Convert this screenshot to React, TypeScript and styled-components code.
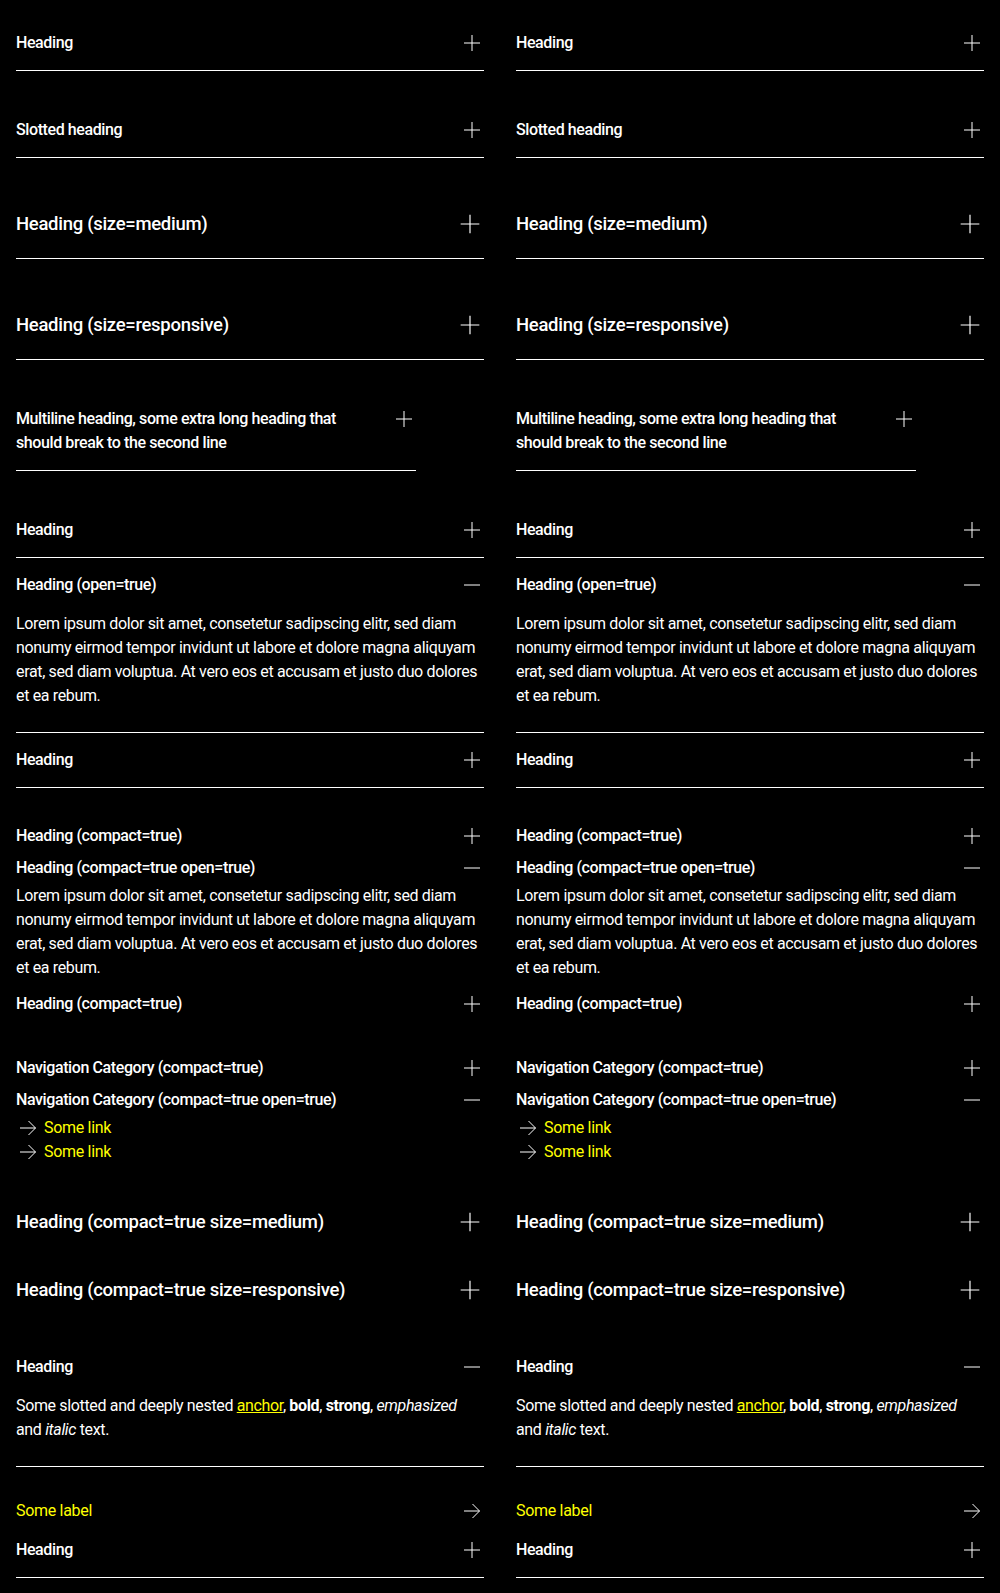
import React from 'react';
import styled, { createGlobalStyle } from 'styled-components';

type Size = 'small' | 'medium';

const GlobalStyle = createGlobalStyle`
  html, body {
    margin: 0;
    background: #000;
  }
  body {
    font-family: Roboto, "Liberation Sans", Arial, sans-serif;
    color: #fff;
    -webkit-font-smoothing: antialiased;
  }
`;

const Page = styled.main`
  display: grid;
  grid-template-columns: 1fr 1fr;
  column-gap: 32px;
  padding: 16px;
  min-height: 1593px;
  box-sizing: border-box;
  background: #000;
`;

const Column = styled.div`
  display: flex;
  flex-direction: column;
  gap: 32px;
  min-width: 0;
`;

const Group = styled.div`
  display: flex;
  flex-direction: column;
`;

const Item = styled.section<{ $compact?: boolean; $narrow?: boolean }>`
  border-bottom: ${p => (p.$compact ? 'none' : '1px solid #fff')};
  max-width: ${p => (p.$narrow ? '400px' : 'none')};
`;

const Header = styled.div<{ $compact?: boolean; $size: Size }>`
  display: flex;
  justify-content: space-between;
  align-items: flex-start;
  gap: 24px;
  padding: ${p => (p.$compact ? '4px 0' : p.$size === 'medium' ? '20px 0' : '15px 0')};
  cursor: pointer;
`;

const Title = styled.h3<{ $size: Size }>`
  margin: 0;
  color: #fff;
  font-weight: 500;
  font-size: ${p => (p.$size === 'medium' ? '18.5px' : '16px')};
  line-height: ${p => (p.$size === 'medium' ? '28px' : '24px')};
  letter-spacing: ${p => (p.$size === 'medium' ? '-0.3px' : '-0.4px')};
`;

const IconBox = styled.span<{ $size?: Size }>`
  flex: none;
  display: flex;
  width: ${p => (p.$size === 'medium' ? '28px' : '24px')};
  height: ${p => (p.$size === 'medium' ? '28px' : '24px')};

  svg {
    width: 100%;
    height: 100%;
  }
`;

const Body = styled.div<{ $compact?: boolean }>`
  padding-bottom: ${p => (p.$compact ? '8px' : '24px')};
  font-size: 16px;
  line-height: 24px;
  letter-spacing: -0.35px;
  color: #fff;

  a {
    color: #ff0;
    text-decoration: underline;
  }
  b,
  strong {
    font-weight: 700;
  }
`;

const LinkList = styled.ul`
  list-style: none;
  margin: 0;
  padding: 0;
`;

const LinkRow = styled.li`
  display: flex;
  align-items: center;
  gap: 4px;
  font-size: 16px;
  line-height: 24px;

  a {
    color: #ff0;
    text-decoration: none;
    letter-spacing: -0.3px;
  }
`;

const LabelRow = styled.a`
  display: flex;
  justify-content: space-between;
  align-items: flex-start;
  gap: 24px;
  color: #ff0;
  text-decoration: none;
  font-size: 16px;
  line-height: 24px;
  letter-spacing: -0.3px;
`;

const PlusIcon = () => (
  <svg viewBox="0 0 24 24" fill="none" stroke="#fff" strokeWidth={1}>
    <path d="M12 4v16M4 12h16" />
  </svg>
);

const MinusIcon = () => (
  <svg viewBox="0 0 24 24" fill="none" stroke="#fff" strokeWidth={1}>
    <path d="M4 12h16" />
  </svg>
);

const ArrowIcon = () => (
  <svg viewBox="0 0 24 24" fill="none" stroke="#fff" strokeWidth={1}>
    <path d="M4 12h15.5M12.5 5l7 7-7 7" />
  </svg>
);

type AccordionProps = {
  heading: React.ReactNode;
  size?: Size;
  compact?: boolean;
  open?: boolean;
  narrow?: boolean;
  children?: React.ReactNode;
};

const Accordion = ({ heading, size = 'small', compact, open, narrow, children }: AccordionProps) => (
  <Item $compact={compact} $narrow={narrow}>
    <Header $compact={compact} $size={size}>
      <Title $size={size}>{heading}</Title>
      <IconBox $size={size}>{open ? <MinusIcon /> : <PlusIcon />}</IconBox>
    </Header>
    {open && <Body $compact={compact}>{children}</Body>}
  </Item>
);

const LOREM =
  'Lorem ipsum dolor sit amet, consetetur sadipscing elitr, sed diam nonumy eirmod tempor invidunt ut labore et dolore magna aliquyam erat, sed diam voluptua. At vero eos et accusam et justo duo dolores et ea rebum.';

const Demo = () => (
  <Column>
    <Group>
      <Accordion heading="Heading" />
    </Group>
    <Group>
      <Accordion heading="Slotted heading" />
    </Group>
    <Group>
      <Accordion heading="Heading (size=medium)" size="medium" />
    </Group>
    <Group>
      <Accordion heading="Heading (size=responsive)" size="medium" />
    </Group>
    <Group>
      <Accordion heading="Multiline heading, some extra long heading that should break to the second line" narrow />
    </Group>
    <Group>
      <Accordion heading="Heading" />
      <Accordion heading="Heading (open=true)" open>
        {LOREM}
      </Accordion>
      <Accordion heading="Heading" />
    </Group>
    <Group>
      <Accordion heading="Heading (compact=true)" compact />
      <Accordion heading="Heading (compact=true open=true)" compact open>
        {LOREM}
      </Accordion>
      <Accordion heading="Heading (compact=true)" compact />
    </Group>
    <Group>
      <Accordion heading="Navigation Category (compact=true)" compact />
      <Accordion heading="Navigation Category (compact=true open=true)" compact open>
        <LinkList>
          <LinkRow>
            <IconBox>
              <ArrowIcon />
            </IconBox>
            <a href="#">Some link</a>
          </LinkRow>
          <LinkRow>
            <IconBox>
              <ArrowIcon />
            </IconBox>
            <a href="#">Some link</a>
          </LinkRow>
        </LinkList>
      </Accordion>
    </Group>
    <Group>
      <Accordion heading="Heading (compact=true size=medium)" size="medium" compact />
    </Group>
    <Group>
      <Accordion heading="Heading (compact=true size=responsive)" size="medium" compact />
    </Group>
    <Group>
      <Accordion heading="Heading" open>
        Some slotted and deeply nested <a href="#">anchor</a>, <b>bold</b>, <strong>strong</strong>,{' '}
        <em>emphasized</em> and <i>italic</i> text.
      </Accordion>
    </Group>
    <Group>
      <LabelRow href="#">
        <span>Some label</span>
        <IconBox>
          <ArrowIcon />
        </IconBox>
      </LabelRow>
      <Accordion heading="Heading" />
    </Group>
  </Column>
);

export default function App() {
  return (
    <>
      <GlobalStyle />
      <Page>
        <Demo />
        <Demo />
      </Page>
    </>
  );
}
